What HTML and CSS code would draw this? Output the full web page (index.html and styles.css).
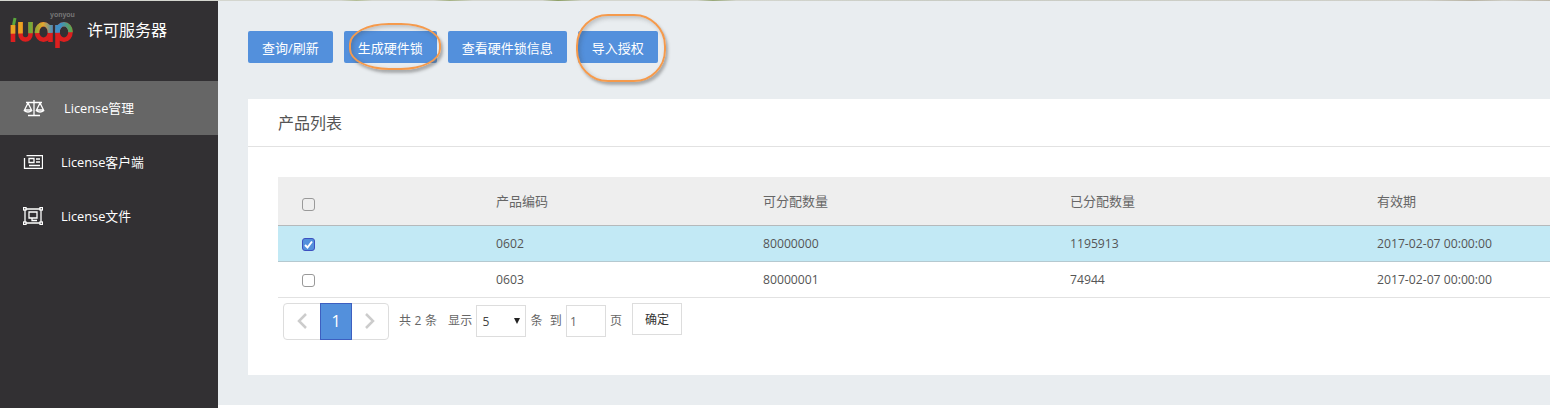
FILE: index.html
```html
<!DOCTYPE html>
<html lang="zh">
<head>
<meta charset="utf-8">
<title>许可服务器</title>
<link rel="stylesheet" href="styles.css">
</head>
<body>
<div class="topline"></div>
<div class="app">
  <aside class="sidebar">
    <div class="brand">
      <svg class="logo" width="80" height="46" viewBox="0 11 80 46" aria-hidden="true">
        <defs>
          <clipPath id="upper"><path d="M0 0H80V32L0 34z"/></clipPath>
          <linearGradient id="top" gradientUnits="userSpaceOnUse" x1="10" y1="0" x2="73" y2="0">
            <stop offset="0" stop-color="#e9a422"/>
            <stop offset=".2" stop-color="#e9a422"/>
            <stop offset=".3" stop-color="#6aa83a"/>
            <stop offset=".4" stop-color="#8aa838"/>
            <stop offset=".52" stop-color="#e4a72a"/>
            <stop offset=".68" stop-color="#3f8fc4"/>
            <stop offset=".8" stop-color="#3f8fc4"/>
            <stop offset="1" stop-color="#62a83e"/>
          </linearGradient>
          <g id="letters" fill="none" stroke-width="4.600">
            <path d="M13 25V42"/>
            <path d="M20.500 22V34a5 5.500 0 0 0 10 0V22"/>
            <ellipse cx="43.500" cy="32" rx="6.500" ry="7.700"/>
            <path d="M50.500 25V42"/>
            <ellipse cx="64" cy="32" rx="6.500" ry="7.700"/>
            <path d="M57.500 25V48"/>
          </g>
        </defs>
        <use href="#letters" stroke="#dc1f1f"/>
        <g clip-path="url(#upper)"><use href="#letters" stroke="url(#top)"/></g>
        <path d="M13.500 25L15 18" stroke="#5aa63c" stroke-width="3" fill="none"/>
      </svg>
      <span class="brand-small">yonyou</span>
      <span class="brand-title">许可服务器</span>
    </div>
    <nav class="menu">
      <a class="menu-item active">
        <svg class="ico" width="22" height="18" viewBox="0 0 22 18" fill="none" stroke="#fff" stroke-width="1.300" aria-hidden="true"><path d="M11 1v15M5 16.500h12M3 3.500h16M5 4L1.500 11h7zM17 4l-3.500 7h7zM1 11.500q4 3 8 0M13 11.500q4 3 8 0"/></svg>
        <span class="menu-label">License管理</span>
      </a>
      <a class="menu-item narrow">
        <svg class="ico" width="20" height="14" viewBox="0 0 20 14" fill="none" stroke="#fff" stroke-width="1.300" aria-hidden="true"><path d="M3.500.5h16v13H1.500V3M6 3.500h5v4H6zM13 4h4M13 7h4M6 10.500h11"/></svg>
        <span class="menu-label">License客户端</span>
      </a>
      <a class="menu-item narrow">
        <svg class="ico" width="20" height="18" viewBox="0 0 20 18" fill="none" stroke="#fff" stroke-width="1.300" aria-hidden="true"><path d="M3 2h14M3 16h14M2 3v12M18 3v12M6 5h8v6H6zM9 11v2.500h5"/><rect x=".5" y=".5" width="2.500" height="2.500"/><rect x="17" y=".5" width="2.500" height="2.500"/><rect x=".5" y="15" width="2.500" height="2.500"/><rect x="17" y="15" width="2.500" height="2.500"/></svg>
        <span class="menu-label">License文件</span>
      </a>
    </nav>
  </aside>
  <main class="content">
    <div class="toolbar">
      <button class="btn">查询/刷新</button>
      <span class="mark mark-a"><button class="btn">生成硬件锁</button></span>
      <button class="btn">查看硬件锁信息</button>
      <span class="mark mark-b"><button class="btn">导入授权</button></span>
    </div>
    <section class="panel">
      <h2 class="panel-title">产品列表</h2>
      <div class="panel-body">
        <table class="grid">
          <thead>
            <tr><th class="c0"><span class="check head"></span></th><th class="c1">产品编码</th><th class="c2">可分配数量</th><th class="c3">已分配数量</th><th>有效期</th></tr>
          </thead>
          <tbody>
            <tr class="selected"><td><span class="check on"><svg width="11" height="11" viewBox="0 0 11 11" fill="none" stroke="#fff" stroke-width="2" aria-hidden="true"><path d="M2 6l2.500 2.500L9 2.500"/></svg></span></td><td>0602</td><td>80000000</td><td>1195913</td><td>2017-02-07 00:00:00</td></tr>
            <tr><td><span class="check"></span></td><td>0603</td><td>80000001</td><td>74944</td><td>2017-02-07 00:00:00</td></tr>
          </tbody>
        </table>
        <div class="pager">
          <div class="pages">
            <a class="page arrow"><svg width="12" height="18" viewBox="0 0 12 18" fill="none" stroke="#ccc" stroke-width="2.500" aria-hidden="true"><path d="M10 2L3 9l7 7"/></svg></a>
            <a class="page current">1</a>
            <a class="page arrow"><svg width="12" height="18" viewBox="0 0 12 18" fill="none" stroke="#ccc" stroke-width="2.500" aria-hidden="true"><path d="M2 2l7 7-7 7"/></svg></a>
          </div>
          <span class="ptext t1">共 2 条</span>
          <span class="ptext t2">显示</span>
          <span class="select"><span>5</span><i class="caret"></i></span>
          <span class="ptext t3">条</span>
          <span class="ptext t4">到</span>
          <span class="pinput">1</span>
          <span class="ptext t5">页</span>
          <button class="ok">确定</button>
        </div>
      </div>
    </section>
  </main>
</div>
</body>
</html>
```
FILE: styles.css
```css
* { box-sizing: border-box; }
html, body { margin: 0; padding: 0; height: 100%; overflow: hidden; }
body {
  font-family: "Open Sans", "Noto Sans CJK SC", sans-serif;
  font-size: 12px;
  color: #555;
  background: #e9edf0;
}
.topline {
  height: 1px;
  background: linear-gradient(90deg, #d4d6cf 0, #d4d6cf 22%, #b3bd95 23%, #d4d6cf 24%, #d4d6cf 28%, #a5b284 29%, #d4d6cf 30.5%, #d4d6cf 35%, #8d9f65 36%, #d4d6cf 37.5%, #d4d6cf 45%, #98a878 46%, #d4d6cf 47.5%, #c9ccc4 60%, #cfcfc8 92%, #b7b2a2 95%, #cfcfc8 97%, #bdb8aa 100%);
}
.app { display: flex; height: 407px; }
.sidebar { width: 218px; flex: none; background: #323033; color: #fff; }
.brand { height: 80px; position: relative; }
.logo { position: absolute; left: 0; top: 10px; }
.brand-small { position: absolute; left: 50px; top: 10px; font: bold 7px "Liberation Sans", sans-serif; color: #777; }
.brand-title { position: absolute; left: 87px; top: 19px; font-size: 16px; line-height: 20px; }
.menu { display: flex; flex-direction: column; }
.menu-item { height: 54px; display: flex; align-items: center; padding-left: 23px; gap: 19px; font-size: 12.800px; color: #fff; }
.menu-item.active { background: #666; }
.menu-item.narrow { gap: 18px; }
.menu-label { padding-bottom: 2px; }
.ico { flex: none; }
.content { flex: 1; min-width: 0; padding-left: 30px; border-bottom: 3px solid #fff; }
.toolbar { display: flex; align-items: center; height: 98px; padding-bottom: 6px; gap: 11px; }
.btn { height: 32px; border: 0; border-radius: 2px; background: #5390dc; color: #fff; font: 13px "Open Sans", "Noto Sans CJK SC", sans-serif; padding: 0 14px; white-space: nowrap; }
.mark { position: relative; display: block; }
.mark::after { content: ""; position: absolute; border: 2px solid #f59a4c; box-shadow: 2px 3px 3px rgba(90,90,90,.45), inset 2px 2px 4px rgba(60,60,60,.25); pointer-events: none; }
.mark-a::after { left: 5px; top: -8px; width: 88px; height: 43px; border-radius: 40px / 21px; }
.mark-b::after { left: -2px; top: -17px; width: 86px; height: 64px; border-radius: 32px; }
.panel { background: #fff; height: 276px; }
.panel-title { margin: 0; height: 48px; padding: 14px 0 0 30px; font-size: 16px; line-height: 20px; font-weight: 400; color: #555; border-bottom: 1px solid #e2e2e2; }
.panel-body { padding: 30px 0 0 30px; }
.grid { width: 1272px; border-collapse: collapse; table-layout: fixed; }
.grid th { height: 48px; background: #eee; border-bottom: 1px solid #b5b9bb; text-align: left; font-weight: 400; font-size: 13px; color: #666; padding: 0; }
.grid td { height: 36px; padding: 0; border-bottom: 1px solid #e2e2e2; font-size: 12.200px; color: #555; }
.grid .selected td { background: #c2e9f5; border-bottom-color: #b5c9d0; }
.c0 { width: 218px; }
.c1 { width: 267px; }
.c2, .c3 { width: 307px; }
.grid th:first-child, .grid td:first-child { padding-left: 24px; }
.check { display: block; width: 13px; height: 13px; margin-top: 2px; border: 1px solid #999; border-radius: 3px; background: #fff; }
.check.head { background: transparent; margin-top: 7px; }
.check.on { background: #5390dc; border-color: #3d50c0; }
.check.on svg { display: block; }
.pager { display: flex; align-items: center; height: 37px; margin-top: 5px; padding-left: 5px; color: #666; }
.pages { display: flex; height: 37px; width: 106px; border: 1px solid #ddd; border-radius: 4px; }
.page { display: flex; align-items: center; justify-content: center; }
.arrow { width: 36px; }
.current { width: 32px; margin: -1px 0; background: #5390dc; border: 1px solid #3d5fc0; color: #fff; font-size: 16px; }
.ptext { white-space: nowrap; letter-spacing: .2px; margin-bottom: 3px; }
.t1 { margin-left: 10px; }
.t2 { margin-left: 11px; }
.select { width: 50px; height: 32px; border: 1px solid #ddd; margin-left: 3px; display: flex; align-items: center; justify-content: space-between; padding: 0 5px 0 6px; color: #444; }
.caret { width: 0; height: 0; border-left: 3px solid transparent; border-right: 3px solid transparent; border-top: 6px solid #222; }
.t3 { margin-left: 5px; }
.t4 { margin-left: 7px; }
.pinput { width: 40px; height: 32px; border: 1px solid #ddd; margin-left: 4px; display: flex; align-items: center; padding-left: 3px; }
.t5 { margin-left: 4px; }
.ok { width: 50px; height: 32px; margin-left: 10px; margin-bottom: 5px; background: #fff; border: 1px solid #ddd; color: #333; font: 12px "Open Sans", "Noto Sans CJK SC", sans-serif; padding: 0; }
```
